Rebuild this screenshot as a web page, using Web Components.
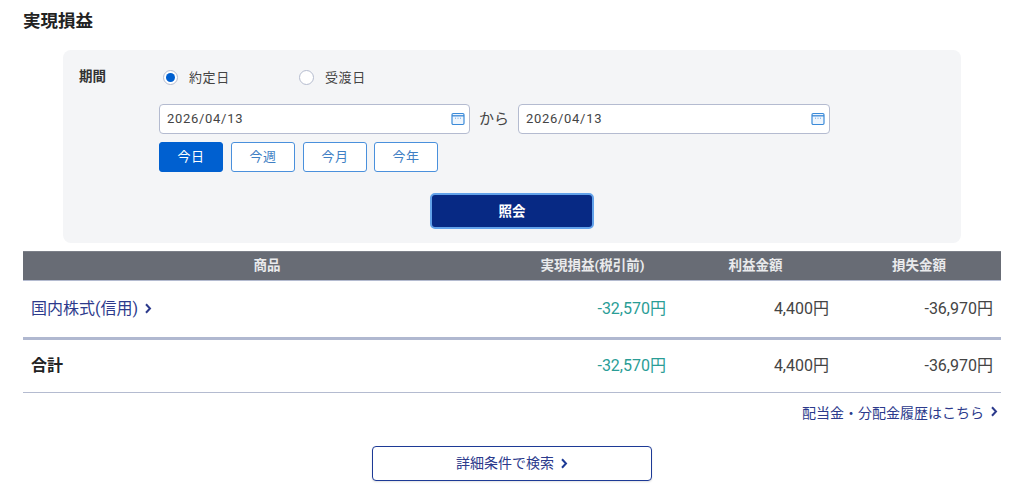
<!DOCTYPE html>
<html lang="ja"><head><meta charset="utf-8">
<style>
html,body{margin:0;background:#fff;overflow:hidden}
body{font-family:Roboto,"Noto Sans CJK JP",sans-serif;color:#2b2b2b;height:492px}
</style></head><body>
<pl-page></pl-page>
<script>
const FONT='Roboto,"Noto Sans CJK JP",sans-serif';
const chev=(c,w=8,h=11)=>`<svg width="${w}" height="${h}" viewBox="0 0 8 11" fill="none" stroke="${c}" stroke-width="2"><path d="M2 1.2l4 4.3-4 4.3"/></svg>`;
function def(name,css,html){
  customElements.define(name,class extends HTMLElement{
    constructor(){super();const r=this.attachShadow({mode:'open'});
      const a=n=>this.getAttribute(n)||'';
      r.innerHTML=`<style>${css}</style>`+(typeof html==='function'?html(a):html);}
  });
}
def('pl-radio',`:host{display:inline-flex;align-items:center;gap:11px;font-size:13px;color:#444;letter-spacing:.6px}
.c{width:15px;height:15px;border-radius:50%;border:1px solid #b5bccf;background:#fff;display:flex;align-items:center;justify-content:center;box-sizing:border-box}
.d{width:9px;height:9px;border-radius:50%;background:#0060d0}
.t{padding-bottom:2px}`,
a=>`<span class="c">${a('on')?'<span class="d"></span>':''}</span><span class="t"><slot></slot></span>`);
def('pl-date',`:host{display:flex;align-items:center;justify-content:space-between;box-sizing:border-box;height:30px;background:#fff;border:1px solid #b4bbd0;border-radius:4px;padding:0 4px 0 7px;font-size:13px;letter-spacing:.7px;color:#444}
.t{padding-bottom:2px}
svg{display:block}`,
a=>`<span class="t"><slot></slot></span><svg width="14" height="14" viewBox="0 0 14 14" fill="none"><rect x="1" y="1.5" width="12" height="11" rx="1.2" fill="#eef5fd" stroke="#3a8ad8" stroke-width="1.2"/><path d="M1 3.8h12" stroke="#3a8ad8" stroke-width="1.3"/><path d="M4 6.2h1M6.5 6.2h1M9 6.2h1" stroke="#6aa5e0"/></svg>`);
def('pl-pill',`:host{display:flex;align-items:center;justify-content:center;box-sizing:border-box;width:64px;height:30px;padding-bottom:3px;border-radius:3px;border:1.4px solid #4a90dc;background:#fff;color:#3f7fc4;font-size:13px;letter-spacing:.5px}
:host([on]){background:#0060d0;border-color:#0060d0;color:#fff}`,`<slot></slot>`);
def('pl-panel',`:host{display:block;box-sizing:border-box;height:193px;margin-left:40px;margin-right:40px;background:#f4f5f7;border-radius:8px;position:relative}
.grid{display:flex;padding:19px 0 0 16px}
.lbl{width:80px;flex:none;font-size:13.5px;font-weight:700;color:#333;line-height:15px}
.radios{display:flex;height:16px;align-items:center;padding-left:4px;margin-bottom:19px}
.radios pl-radio:first-child{width:136px}
.dates{display:flex;align-items:center}
.dates pl-date{width:312px}
.dates .first{width:311px}
.kara{width:48px;text-align:center;font-size:15px;color:#444;padding-bottom:3px;box-sizing:border-box}
.pills{display:flex;gap:8px;margin-top:8px}
.go{display:flex;justify-content:center;margin-top:21px;margin-left:-96px}
.go span{box-sizing:border-box;width:164px;height:36px;padding-bottom:3px;background:#072984;border:2px solid #62a2ea;border-radius:5px;color:#fff;font-size:13.5px;font-weight:700;display:flex;align-items:center;justify-content:center}
.body{width:802px}
.pills pl-pill:nth-child(4){margin-left:-1px}`,
`<div class="grid"><div class="lbl">期間</div><div class="body">
<div class="radios"><pl-radio on="1">約定日</pl-radio><pl-radio>受渡日</pl-radio></div>
<div class="dates"><pl-date class="first">2026/04/13</pl-date><span class="kara">から</span><pl-date>2026/04/13</pl-date></div>
<div class="pills"><pl-pill on>今日</pl-pill><pl-pill>今週</pl-pill><pl-pill>今月</pl-pill><pl-pill>今年</pl-pill></div>
<div class="go"><span>照会</span></div>
</div></div>`);
def('pl-table',`:host{display:block;margin-top:8px;font-size:16px}
.row{display:grid;grid-template-columns:488px 163px 163px 164px;align-items:center}
.h{height:30px;background:#686c75;color:#e9eaec;font-size:13.5px;font-weight:700;box-sizing:border-box;border-bottom:1px solid #b4bbd0;border-top:1px solid #7c8089;line-height:1;padding-bottom:1px}
.h>*{text-align:center}
.n{text-align:right;padding-right:8px;color:#444;padding-bottom:4px}
.g{color:#2a9d96}
.r2{border-bottom:1px solid #b4bbd0;box-sizing:border-box;height:53px}
.r1{box-sizing:border-box;height:59px;border-bottom:3px solid #b0b8d0}
.nm{padding-left:8px;color:#2c3a8c;display:flex;align-items:center;gap:6px;padding-bottom:4px}
.nm svg{margin-top:3px}
.t{padding-left:8px;font-weight:700;color:#222;padding-bottom:4px}`,
`<div class="row h"><span>商品</span><span>実現損益(税引前)</span><span>利益金額</span><span>損失金額</span></div>
<div class="row r1"><span class="nm">国内株式(信用)${chev('#2c3a8c')}</span><span class="n g">-32,570円</span><span class="n">4,400円</span><span class="n">-36,970円</span></div>
<div class="row r2"><span class="t">合計</span><span class="n g">-32,570円</span><span class="n">4,400円</span><span class="n">-36,970円</span></div>`);
def('pl-page',`:host{display:block;padding:12px 23px 0;width:978px;font-family:${FONT}}
h2{margin:0;font-size:17.5px;font-weight:700;line-height:18px;color:#222}
pl-panel{margin-top:20px}
.link{display:flex;justify-content:flex-end;align-items:center;gap:6px;margin-top:11px;height:15px;font-size:14px;color:#2c3a8c;padding-right:3px}
.wrap{display:flex;justify-content:center;margin-top:27px}
.btn{box-sizing:border-box;width:280px;height:35px;padding-bottom:3px;border:1px solid #1d3a96;border-radius:4px;background:#fff;color:#2c3a8c;font-size:14px;display:flex;align-items:center;justify-content:center;gap:6px;box-shadow:0 1px 2px rgba(0,0,0,.12)}
.btn svg{margin-top:3px}`,
`<h2>実現損益</h2><pl-panel></pl-panel><pl-table></pl-table>
<div class="link">配当金・分配金履歴はこちら${chev('#2c3a8c')}</div>
<div class="wrap"><div class="btn">詳細条件で検索${chev('#1d3a96')}</div></div>`);
</script></body></html>
